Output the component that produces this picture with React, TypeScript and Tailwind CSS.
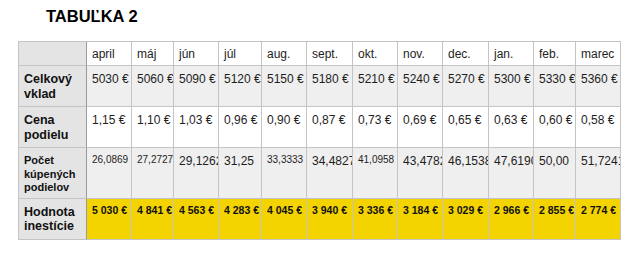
const months = ['april', 'máj', 'jún', 'júl', 'aug.', 'sept.', 'okt.', 'nov.', 'dec.', 'jan.', 'feb.', 'marec']

const vklad = ['5030 €', '5060 €', '5090 €', '5120 €', '5150 €', '5180 €', '5210 €', '5240 €', '5270 €', '5300 €', '5330 €', '5360 €']

const cena = ['1,15 €', '1,10 €', '1,03 €', '0,96 €', '0,90 €', '0,87 €', '0,73 €', '0,69 €', '0,65 €', '0,63 €', '0,60 €', '0,58 €']

// small = rendered in the smaller font size in the source table
const pocet: { v: string; small?: boolean }[] = [
  { v: '26,0869', small: true },
  { v: '27,2727', small: true },
  { v: '29,1262' },
  { v: '31,25' },
  { v: '33,3333', small: true },
  { v: '34,4827' },
  { v: '41,0958', small: true },
  { v: '43,4782' },
  { v: '46,1538' },
  { v: '47,6190' },
  { v: '50,00' },
  { v: '51,7241' },
]

const hodnota = ['5 030 €', '4 841 €', '4 563 €', '4 283 €', '4 045 €', '3 940 €', '3 336 €', '3 184 €', '3 029 €', '2 966 €', '2 855 €', '2 774 €']

const cell = 'border-r border-b border-[#c4c4c4] overflow-hidden whitespace-nowrap pl-[5px]'
const label = 'border-r border-b border-[#c4c4c4] border-r-[#9a9a9a] bg-[#e4e4e4] pl-[5px] font-bold text-[#111]'

export default function App() {
  return (
    <div className="min-h-[264px] bg-white font-['Liberation_Sans',Arial,sans-serif] text-[#1e1e1e]">
      <h1 className="pl-[46px] pt-[6px] text-[16.5px] leading-[20px] font-bold text-black">TABUĽKA 2</h1>

      <div className="ml-[18px] mt-[15px] grid w-[603px] grid-cols-[68px_45px_42px_45px_43px_45px_46px_45px_45px_46px_45px_42px_45px] grid-rows-[24px_41px_41px_51px_41px] border-t border-l border-[#c4c4c4]">
        {/* header */}
        <div className={label} />
        {months.map((m) => (
          <div key={m} className={`${cell} bg-white pt-[5px] text-[12px] leading-[14px]`}>
            {m}
          </div>
        ))}

        {/* celkovy vklad */}
        <div className={`${label} pt-[6px] text-[12.5px] leading-[15px]`}>
          Celkový
          <br />
          vklad
        </div>
        {vklad.map((v, i) => (
          <div key={i} className={`${cell} bg-[#efefef] pt-[6px] text-[12px] leading-[14px]`}>
            {v}
          </div>
        ))}

        {/* cena podielu */}
        <div className={`${label} pt-[6px] text-[12.5px] leading-[15px]`}>
          Cena
          <br />
          podielu
        </div>
        {cena.map((v, i) => (
          <div key={i} className={`${cell} bg-white pt-[6px] text-[12px] leading-[14px]`}>
            {v}
          </div>
        ))}

        {/* pocet kupenych podielov */}
        <div className={`${label} pt-[6px] text-[11px] leading-[13.5px]`}>
          Počet
          <br />
          kúpených
          <br />
          podielov
        </div>
        {pocet.map((p, i) => (
          <div
            key={i}
            className={`${cell} bg-[#efefef] pt-[6px] ${p.small ? 'text-[10px] leading-[12px]' : 'text-[12px] leading-[14px]'}`}
          >
            {p.v}
          </div>
        ))}

        {/* hodnota investicie */}
        <div className={`${label} pt-[6px] text-[12.5px] leading-[14px]`}>
          Hodnota
          <br />
          inestície
        </div>
        {hodnota.map((v, i) => (
          <div key={i} className={`${cell} bg-[#f3d300] pt-[5px] text-[10.5px] leading-[12px] font-bold text-[#111]`}>
            {v}
          </div>
        ))}
      </div>
    </div>
  )
}
